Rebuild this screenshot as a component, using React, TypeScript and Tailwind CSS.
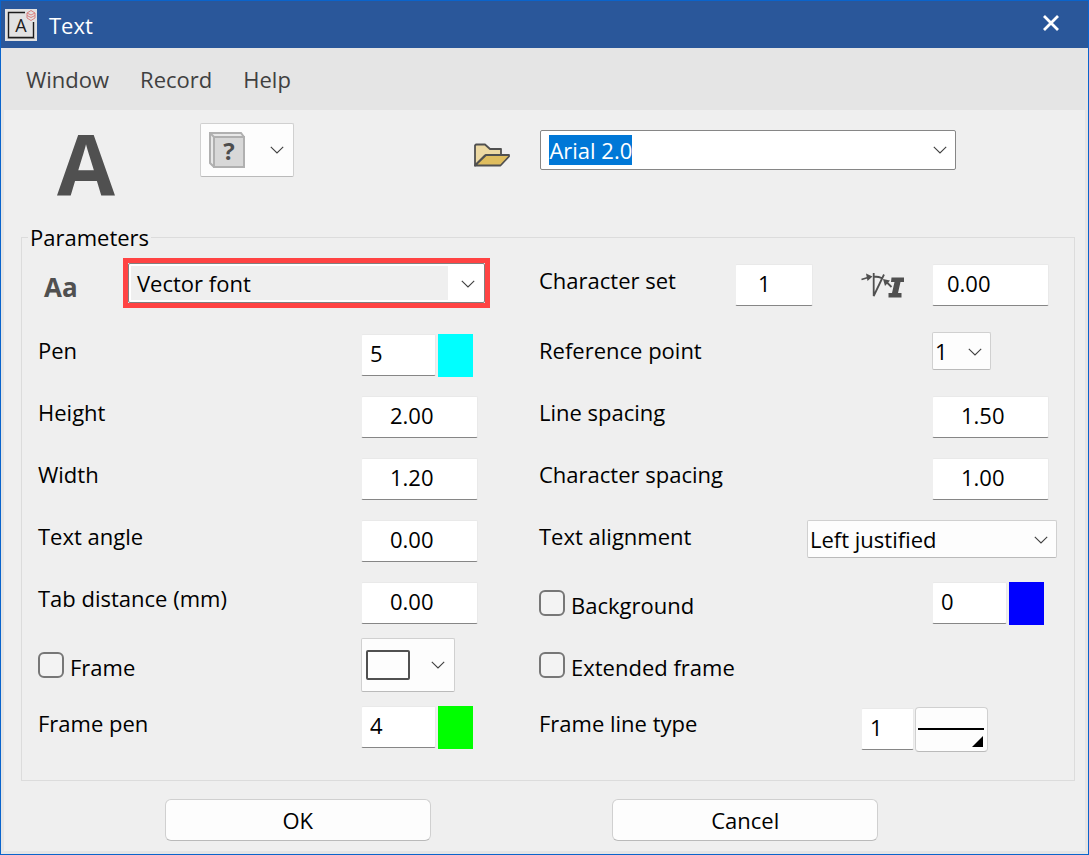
import React, { useEffect, useRef, useState } from 'react';

const field =
    'h-[42px] rounded-xs border border-[#e9e9e9] border-l-[#efefef] border-b-[#868686] bg-white pb-1 outline-none';
const combo = 'rounded-xs border border-[#d0d0d0] border-b-[#bababa] bg-[#fdfdfd]';

function Chevron({ className = '' }: { className?: string }) {
    return (
        <svg className={`pointer-events-none h-2 w-4 ${className}`} viewBox="0 0 16 8" fill="none" aria-hidden="true">
            <path d="M1.8 0.8 L8 7 L14.2 0.8" stroke="#404040" strokeWidth="1.1" />
        </svg>
    );
}

function AppIcon() {
    return (
        <div className="relative flex size-8 items-center justify-center bg-[#e2e2e2]">
            <svg className="absolute inset-0" viewBox="0 0 32 32" fill="none" aria-hidden="true">
                <path d="M2.5 29.5 H30" stroke="#aaa" strokeWidth="1" />
                <path d="M20 3.5 H3.5 V28.5 H28.5 V13" stroke="#1c1c1c" strokeWidth="1.4" />
                <path
                    d="M22 4 L26 1.5 L30 4 V9 L26 11.5 L22 9 Z M22 4 L26 6 L30 4 M22 6.5 L26 8.5 L30 6.5"
                    stroke="#d98080"
                    strokeWidth="1"
                />
            </svg>
            <span className="text-lg leading-none text-[#1c1c1c]">A</span>
        </div>
    );
}

function SymbolIcon() {
    return (
        <div className="relative size-9">
            <svg className="absolute inset-0" viewBox="0 0 36 36" fill="none" aria-hidden="true">
                <path d="M1 1 H32 L35 5 V35 H5 L1 31 Z" fill="#e8e8e8" stroke="#b0b0b0" strokeWidth="2" />
                <path d="M5 5 H35 V35 H5 Z" fill="#d8d8d8" stroke="#b0b0b0" strokeWidth="2" />
                <path d="M1 1 L5 5" stroke="#b0b0b0" strokeWidth="2" />
            </svg>
            <span className="absolute inset-0 flex items-center justify-center pl-1 pt-0.5 text-2xl font-bold leading-none text-[#4d4d4d]">
                ?
            </span>
        </div>
    );
}

function FolderIcon() {
    return (
        <svg className="h-6 w-9" viewBox="0 0 36 24" aria-hidden="true">
            <g stroke="#505050" strokeWidth="1.8" strokeLinejoin="round">
                <path d="M1 22.5 V2.5 L2 1.5 H11 L16 6 H27 V12 L11 12.5 Z" fill="#edd9a3" />
                <path d="M1 22.5 L12 12 H35 V13.5 L26.5 22.5 Z" fill="#dfbd5e" />
            </g>
        </svg>
    );
}

function SlantIcon() {
    return (
        <svg className="h-8 w-11" viewBox="0 0 44 32" fill="none" role="img" aria-label="Slant angle">
            <g stroke="#505050" strokeWidth="1.8">
                <path d="M12.7 4 V27 L23 5.5 M12.7 7.5 Q18 7.5 22 9.5" />
                <path d="M0.5 10.5 L7 8.5 M30.5 18 L25 12.5" />
            </g>
            <path d="M11.5 7.5 L5 4.5 L6.5 12 Z M22 10 L29 11.5 L24 17 Z" fill="#505050" />
            <path d="M30.5 8.5 H43 V13 H39.5 L37 24 H40.5 V28.5 H27.5 V24 H31 L33.5 13 H30 Z" fill="#505050" />
        </svg>
    );
}

function Row({ children }: { children: React.ReactNode }) {
    return <div className="flex h-[62px] items-center">{children}</div>;
}

type InputRowProps = {
    id: string;
    label: string;
    value: string;
    side: string;
};

function InputRow({ id, label, value, side }: InputRowProps) {
    return (
        <Row>
            <label htmlFor={id} className="flex-1 pb-2.5">
                {label}
            </label>
            <div className={side}>
                <input id={id} defaultValue={value} className={`w-[117px] pl-7 ${field}`} />
            </div>
        </Row>
    );
}

type PenProps = {
    id: string;
    value: string;
    color: string;
    label?: string;
};

function PenInput({ id, value, color, label }: PenProps) {
    return (
        <div className="flex gap-0.5">
            <input id={id} aria-label={label} defaultValue={value} className={`w-[75px] pl-2 ${field}`} />
            <button type="button" aria-label="Pen color" className={`h-[43px] w-[35px] ${color}`} />
        </div>
    );
}

function Check({ label }: { label: string }) {
    return (
        <label className="flex flex-1 items-center gap-1.5">
            <input
                type="checkbox"
                className="size-[26px] appearance-none rounded-md border-2 border-[#777] bg-[#f3f3f3] checked:bg-[#0078d7]"
            />
            <span className="pt-1">{label}</span>
        </label>
    );
}

// width of the control area at the right of each column
const left = 'w-[178px]';
const right = 'w-[142px]';

export default function App() {
    const [font, setFont] = useState('Arial 2.0');
    const fontRef = useRef<HTMLInputElement>(null);

    useEffect(() => {
        fontRef.current?.focus();
        fontRef.current?.select();
    }, []);

    return (
        <div className="flex min-h-screen flex-col border border-[#0a64cc] bg-[#e5e5e5] font-['Open_Sans','Noto_Sans',sans-serif] text-[22px] leading-8 text-black">
            {/* Title bar */}
            <header className="flex h-[47px] items-center bg-[#2a579a] pl-1 pr-7 text-white">
                <AppIcon />
                <h1 className="flex-1 pl-3">Text</h1>
                <button type="button" aria-label="Close" className="pb-1">
                    <svg className="size-[18px]" viewBox="0 0 18 18" aria-hidden="true">
                        <path d="M2 2 L16 16 M16 2 L2 16" stroke="#fff" strokeWidth="2.8" />
                    </svg>
                </button>
            </header>

            {/* Menu */}
            <nav className="flex h-[62px] items-center gap-[31px] pl-[25px] text-[#404040]">
                <button type="button">Window</button>
                <button type="button">Record</button>
                <button type="button">Help</button>
            </nav>

            <main className="mx-[3px] mb-[3px] flex-1 bg-[#efefef] pl-[17px] pr-2.5">
                {/* Font selection */}
                <div className="flex h-[94px] pt-[13px]">
                    <span className="w-[179px] pl-9 text-[84px] font-bold leading-[80px] text-[#505050]">A</span>
                    <div className="flex h-[54px] flex-1 items-center">
                        <button
                            type="button"
                            aria-label="Symbol"
                            className={`flex h-[54px] w-[94px] items-center justify-between pl-2 pr-2 ${combo}`}
                        >
                            <SymbolIcon />
                            <Chevron />
                        </button>
                        <button type="button" aria-label="Open font" className="ml-auto pt-2.5">
                            <FolderIcon />
                        </button>
                        <div className="relative ml-[30px] mr-[119px] w-[47.5%]">
                            <input
                                ref={fontRef}
                                aria-label="Font"
                                value={font}
                                onChange={(e) => setFont(e.target.value)}
                                className="h-10 w-full rounded-xs border border-[#868686] bg-white pl-2 outline-none selection:bg-[#0078d7] selection:text-white"
                            />
                            <Chevron className="absolute right-2 top-4" />
                        </div>
                    </div>
                </div>

                {/* Parameters */}
                <fieldset className="mt-[17px] border border-[#dcdcdc] pb-[22px] pl-4">
                    <legend className="-ml-2.5 px-0.5">Parameters</legend>
                    <div className="grid grid-cols-[501fr_535fr]">
                        <div>
                            <div className="mb-[7px] flex h-16 items-center">
                                <label htmlFor="fontType" className="w-[85px] pl-1.5 pt-1 text-[26px] font-bold text-[#505050]">
                                    Aa
                                </label>
                                <div className="mr-[49px] flex-1 pb-1">
                                    <div className="border-[5px] border-[#ff4343]">
                                        <div className="relative rounded-xs border border-[#808080] bg-white">
                                            <select
                                                id="fontType"
                                                className="h-[38px] w-full appearance-none bg-[#efefef] bg-clip-content p-0.5 pr-9 indent-1.5 outline-none"
                                            >
                                                <option>Vector font</option>
                                            </select>
                                            <Chevron className="absolute right-2 top-4" />
                                        </div>
                                    </div>
                                </div>
                            </div>
                            <Row>
                                <label htmlFor="pen" className="flex-1 pb-2.5">
                                    Pen
                                </label>
                                <div className={left}>
                                    <PenInput id="pen" value="5" color="bg-[#00ffff]" />
                                </div>
                            </Row>
                            <InputRow id="height" label="Height" value="2.00" side={left} />
                            <InputRow id="width" label="Width" value="1.20" side={left} />
                            <InputRow id="angle" label="Text angle" value="0.00" side={left} />
                            <InputRow id="tab" label="Tab distance (mm)" value="0.00" side={left} />
                            <Row>
                                <Check label="Frame" />
                                <div className={left}>
                                    <button
                                        type="button"
                                        aria-label="Frame shape"
                                        className={`flex h-[54px] w-[94px] items-center justify-between pl-1 pr-2 ${combo}`}
                                    >
                                        <span className="h-[30px] w-11 rounded-xs border-2 border-[#505050]" />
                                        <Chevron />
                                    </button>
                                </div>
                            </Row>
                            <Row>
                                <label htmlFor="framePen" className="flex-1 pb-2">
                                    Frame pen
                                </label>
                                <div className={left}>
                                    <PenInput id="framePen" value="4" color="bg-[#00ff00]" />
                                </div>
                            </Row>
                        </div>

                        <div>
                            <div className="mb-[7px] flex h-16 items-center">
                                <label htmlFor="charset" className="flex-1 pb-2.5">
                                    Character set
                                </label>
                                <input id="charset" defaultValue="1" className={`mr-12 w-[78px] pl-[22px] ${field}`} />
                                <div className="w-[71px]">
                                    <SlantIcon />
                                </div>
                                <div className={right}>
                                    <input aria-label="Slant angle" defaultValue="0.00" className={`w-[117px] pl-3.5 ${field}`} />
                                </div>
                            </div>
                            <Row>
                                <label htmlFor="refPoint" className="flex-1 pb-2.5">
                                    Reference point
                                </label>
                                <div className={`pb-2 ${right}`}>
                                    <div className="relative w-[59px]">
                                        <select id="refPoint" className={`h-[38px] w-full appearance-none pl-0.5 ${combo}`}>
                                            <option>1</option>
                                        </select>
                                        <Chevron className="absolute right-2 top-4" />
                                    </div>
                                </div>
                            </Row>
                            <InputRow id="lineSpacing" label="Line spacing" value="1.50" side={right} />
                            <InputRow id="charSpacing" label="Character spacing" value="1.00" side={right} />
                            <Row>
                                <label htmlFor="align" className="flex-1 pb-2.5">
                                    Text alignment
                                </label>
                                <div className="mr-[17px] w-[250px] pb-1">
                                    <div className="relative">
                                        <select id="align" className={`h-[38px] w-full appearance-none pl-0.5 ${combo}`}>
                                            <option>Left justified</option>
                                        </select>
                                        <Chevron className="absolute right-2 top-4" />
                                    </div>
                                </div>
                            </Row>
                            <Row>
                                <Check label="Background" />
                                <div className={right}>
                                    <PenInput id="background" label="Background pen" value="0" color="bg-[#0000ff]" />
                                </div>
                            </Row>
                            <Row>
                                <Check label="Extended frame" />
                            </Row>
                            <Row>
                                <label htmlFor="lineType" className="flex-1 pb-2">
                                    Frame line type
                                </label>
                                <div className="flex w-[213px] items-center gap-px pt-1">
                                    <input id="lineType" defaultValue="1" className={`w-[53px] pl-2 ${field}`} />
                                    <button
                                        type="button"
                                        aria-label="Line type"
                                        className="h-[45px] w-[73px] rounded-sm border border-[#d0d0d0] border-b-[#bababa] bg-[#fdfdfd]"
                                    >
                                        <svg className="h-[43px] w-[71px]" viewBox="0 0 71 43" aria-hidden="true">
                                            <path d="M2 21 H68" stroke="#000" strokeWidth="2" />
                                            <path d="M67 28 V39 H56 Z" fill="#000" />
                                        </svg>
                                    </button>
                                </div>
                            </Row>
                        </div>
                    </div>
                </fieldset>

                {/* Actions */}
                <div className="grid grid-cols-2 justify-items-center pb-2 pl-[53px] pr-[106px] pt-[18px]">
                    <button type="button" className="h-[42px] w-[266px] rounded-md border border-[#d0d0d0] border-b-[#bababa] bg-[#fdfdfd]">
                        OK
                    </button>
                    <button type="button" className="h-[42px] w-[266px] rounded-md border border-[#d0d0d0] border-b-[#bababa] bg-[#fdfdfd]">
                        Cancel
                    </button>
                </div>
            </main>
        </div>
    );
}
